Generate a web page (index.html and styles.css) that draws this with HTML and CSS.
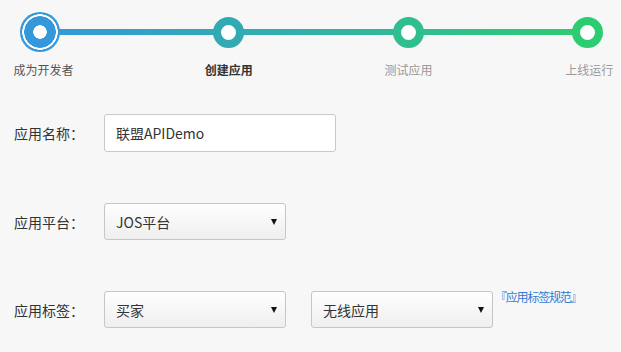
FILE: index.html
```html
<!DOCTYPE html>
<html lang="zh-CN">
<head>
<meta charset="utf-8">
<title>创建应用</title>
<link rel="stylesheet" href="styles.css">
</head>
<body>
<div class="page">
  <div class="steps">
    <div class="steps-line"></div>
    <div class="step step-done">
      <div class="dot-wrap"><span class="dot dot-big"></span></div>
      <span class="step-label">成为开发者</span>
    </div>
    <div class="step step-current">
      <div class="dot-wrap"><span class="dot dot-2"></span></div>
      <span class="step-label">创建应用</span>
    </div>
    <div class="step step-3">
      <div class="dot-wrap"><span class="dot dot-3"></span></div>
      <span class="step-label">测试应用</span>
    </div>
    <div class="step step-4">
      <div class="dot-wrap"><span class="dot dot-4"></span></div>
      <span class="step-label">上线运行</span>
    </div>
  </div>

  <form class="form">
    <div class="row row-name">
      <label class="label">应用名称：</label>
      <input class="input" type="text" value="联盟APIDemo">
    </div>
    <div class="row row-platform">
      <label class="label">应用平台：</label>
      <span class="select"><span class="select-text">JOS平台</span></span>
    </div>
    <div class="row row-tag">
      <label class="label">应用标签：</label>
      <span class="select"><span class="select-text">买家</span></span>
      <span class="select select-2"><span class="select-text">无线应用</span></span>
      <a class="tag-link" href="#">『应用标签规范』</a>
    </div>
  </form>
</div>
</body>
</html>
```

FILE: styles.css
```css
* { box-sizing: border-box; }
html, body {
  margin: 0;
  padding: 0;
  background: #f7f7f7;
}
body {
  font-family: "Noto Sans CJK SC", "Noto Sans", sans-serif;
  color: #333;
  width: 621px;
  height: 352px;
  overflow: hidden;
}
.page {
  padding: 12px 0 0 0;
}
.steps {
  position: relative;
  display: flex;
  width: 607px;
  margin-left: 10px;
}
.steps-line {
  position: absolute;
  left: 30px;
  width: 548px;
  top: 17px;
  height: 6px;
  background: linear-gradient(to right, #3498db, #2ecc71);
}
.step {
  position: relative;
  width: 60px;
  display: flex;
  flex-direction: column;
  align-items: center;
}
.step-current { margin-left: 129px; }
.step-3 { margin-left: 120px; }
.step-4 { margin-left: 119px; }
.dot-wrap {
  width: 40px;
  height: 40px;
  display: flex;
  align-items: center;
  justify-content: center;
}
.dot {
  display: block;
  width: 31px;
  height: 31px;
  border-radius: 50%;
  background: #fff;
  border: 8.5px solid #2ecc71;
}
.dot-big {
  width: 40px;
  height: 40px;
  border: none;
  background: radial-gradient(circle, #fff 0 6.5px, #3498db 7px 15.5px, #fff 16px 17.5px, #3498db 18px 20px);
}
.dot-2 { border-color: #31abb3; }
.dot-3 { border-color: #2fbe8f; }
.dot-4 { border-color: #2ecc71; }
.step-label {
  margin-top: 10px;
  font-size: 12px;
  line-height: 16px;
  color: #999;
  white-space: nowrap;
}
.step-done .step-label { color: #555; margin-left: 7px; }
.step-current .step-label { color: #333; font-weight: bold; }
.step-4 .step-label { margin-left: 4px; }

.form {
  margin: 0;
  padding: 0 0 0 14px;
}
.row {
  display: flex;
  align-items: center;
}
.row-name { margin-top: 36px; }
.row-platform { margin-top: 51px; }
.row-tag { margin-top: 51px; align-items: flex-start; }
.label {
  width: 90px;
  font-size: 14px;
  line-height: 20px;
  color: #333;
  white-space: nowrap;
}
.row-tag .label { margin-top: 9px; }
.input {
  width: 232px;
  height: 38px;
  border: 1px solid #c9c9c9;
  border-radius: 3px;
  background: #fff;
  padding: 0 11px;
  font-family: "Noto Sans CJK SC", "Noto Sans", sans-serif;
  font-size: 14px;
  color: #333;
  outline: none;
}
.select {
  position: relative;
  display: flex;
  align-items: center;
  width: 182px;
  height: 37px;
  border: 1px solid #c6c6c6;
  border-radius: 3px;
  background: linear-gradient(to bottom, #ffffff, #eeeeee);
  padding: 0 11px;
  font-size: 14px;
  color: #333;
}
.select::after {
  content: "";
  position: absolute;
  right: 8px;
  top: 15px;
  border-left: 3.5px solid transparent;
  border-right: 3.5px solid transparent;
  border-top: 6px solid #111;
}
.select-2 { margin-left: 25px; }
.tag-link {
  margin-left: 2px;
  margin-top: -2px;
  font-size: 12px;
  letter-spacing: -1.2px;
  line-height: 16px;
  color: #2f7bd6;
  text-decoration: none;
  white-space: nowrap;
}
```
